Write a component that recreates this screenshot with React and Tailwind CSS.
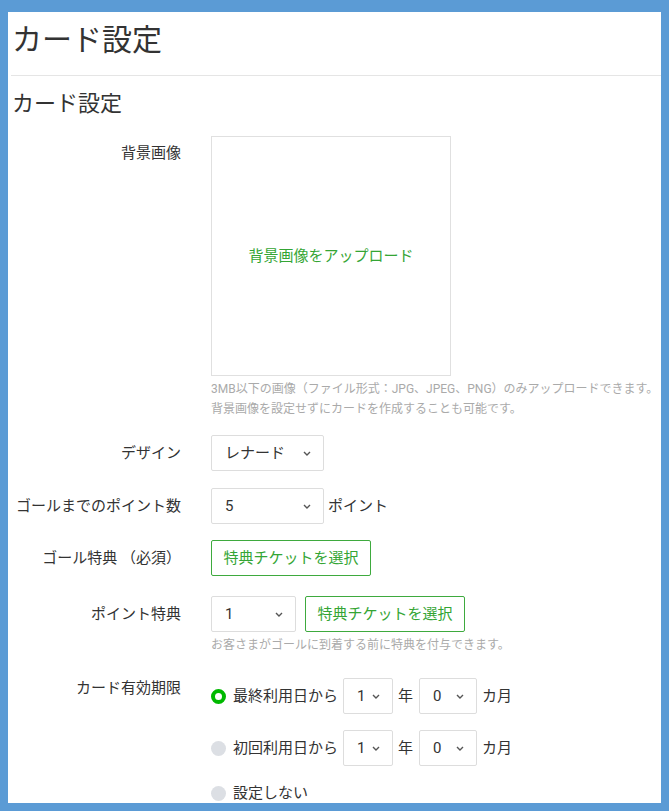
import React from 'react';

const green = 'text-[#34a534]';

function Chevron() {
  return (
    <svg width="8" height="5" viewBox="0 0 8 5" className="shrink-0">
      <path d="M1 1l3 3 3-3" fill="none" stroke="#555" strokeWidth="1.4" />
    </svg>
  );
}

function Select({ value, width }) {
  return (
    <div className={`flex h-9 items-center justify-between rounded-[2px] border border-[#dddddd] bg-white pl-[13px] pr-[12px] text-[15px] text-[#333] ${width}`}>
      <span>{value}</span>
      <Chevron />
    </div>
  );
}

function Row({ label, labelClass = 'pt-2', className = '', children }) {
  return (
    <div className={`flex ${className}`}>
      <div className={`w-[173px] shrink-0 text-right text-[15px] leading-5 text-[#333] ${labelClass}`}>{label}</div>
      <div className="ml-[30px] min-w-0 flex-1">{children}</div>
    </div>
  );
}

function TicketButton({ className = '' }) {
  return (
    <button className={`flex h-9 w-[160px] items-center justify-center rounded-[2px] border border-[#3eaa3e] bg-white text-[15px] ${green} ${className}`}>
      特典チケットを選択
    </button>
  );
}

function Radio({ checked }) {
  return checked ? (
    <span className="block h-[15px] w-[15px] shrink-0 rounded-full border-[4px] border-[#00b900] bg-white" />
  ) : (
    <span className="block h-[15px] w-[15px] shrink-0 rounded-full bg-[#dcdfe4]" />
  );
}

function PeriodOption({ checked, label }) {
  return (
    <div className="flex h-9 items-center text-[15px] text-[#333]">
      <Radio checked={checked} />
      <span className="ml-[7px]">{label}</span>
      <div className="ml-[5px]">
        <Select value="1" width="w-[50px]" />
      </div>
      <span className="ml-[5px]">年</span>
      <div className="ml-[6px]">
        <Select value="0" width="w-[58px]" />
      </div>
      <span className="ml-[5px]">カ月</span>
    </div>
  );
}

export default function App() {
  return (
    <div
      className="h-screen overflow-hidden bg-[#5b9bd5] px-2 pb-2 pt-3"
      style={{ fontFamily: 'Roboto, "Noto Sans CJK JP", sans-serif' }}
    >
      <div className="h-full overflow-hidden bg-white">
        <div className="ml-[3px] border-b border-[#e5e5e5] pb-[15px] pt-2">
          <h1 className="pl-[1px] text-[30px] leading-10 text-[#333]">カード設定</h1>
        </div>

        <h2 className="mt-3 pl-1 text-[22px] leading-8 text-[#333]">カード設定</h2>

        <Row label="背景画像" labelClass="pt-[7px]" className="mt-4">
          <div className="flex h-[240px] w-[240px] items-center justify-center border border-[#e0e0e0]">
            <span className={`text-[15px] ${green}`}>背景画像をアップロード</span>
          </div>
          <p className="mt-[3px] whitespace-nowrap text-xs leading-5 text-[#aaa]">
            3MB以下の画像（ファイル形式：JPG、JPEG、PNG）のみアップロードできます。
            <br />
            背景画像を設定せずにカードを作成することも可能です。
          </p>
        </Row>

        <Row label="デザイン" className="mt-4">
          <Select value="レナード" width="w-[113px]" />
        </Row>

        <Row label="ゴールまでのポイント数" className="mt-[17px]">
          <div className="flex items-center">
            <Select value="5" width="w-[113px]" />
            <span className="ml-1 text-[15px] text-[#333]">ポイント</span>
          </div>
        </Row>

        <Row label="ゴール特典 （必須）" className="mt-4">
          <TicketButton />
        </Row>

        <Row label="ポイント特典" className="mt-5">
          <div className="flex items-center">
            <Select value="1" width="w-[85px]" />
            <TicketButton className="ml-[9px]" />
          </div>
          <p className="mt-[3px] text-xs leading-5 text-[#aaa]">お客さまがゴールに到着する前に特典を付与できます。</p>
        </Row>

        <Row label="カード有効期限" labelClass="pt-0" className="mt-[23px]">
          <PeriodOption checked label="最終利用日から" />
          <div className="mt-4">
            <PeriodOption label="初回利用日から" />
          </div>
          <div className="mt-[17px] flex items-center text-[15px] leading-5 text-[#333]">
            <Radio />
            <span className="ml-[7px]">設定しない</span>
          </div>
        </Row>
      </div>
    </div>
  );
}
